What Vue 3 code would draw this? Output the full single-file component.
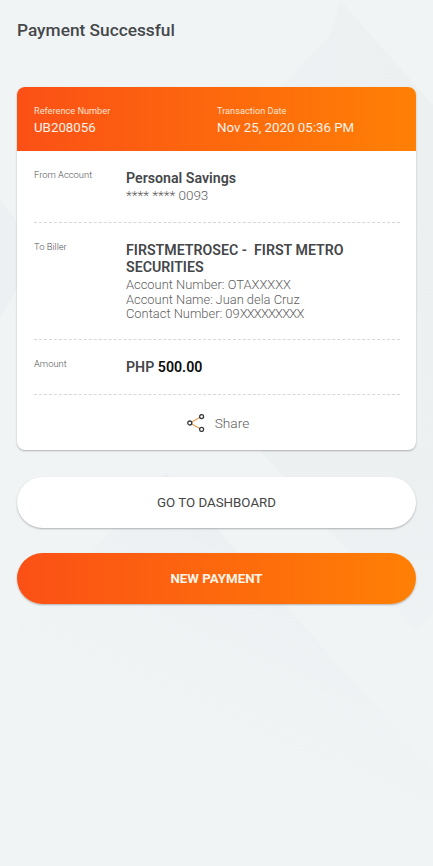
<template>
  <div class="page">
    <svg class="bg-shapes" viewBox="0 0 433 866" preserveAspectRatio="none">
      <defs>
        <linearGradient id="fade-down" x1="0" y1="0" x2="0" y2="1">
          <stop offset="0" stop-color="#ecf0f1" />
          <stop offset="1" stop-color="#eef1f3" stop-opacity="0.6" />
        </linearGradient>
        <linearGradient id="fade-low" x1="0.7" y1="0.25" x2="0.4" y2="0.85">
          <stop offset="0" stop-color="#edf0f2" />
          <stop offset="1" stop-color="#f1f4f5" stop-opacity="0" />
        </linearGradient>
        <linearGradient id="fade-top" x1="1" y1="0.3" x2="0" y2="0.7">
          <stop offset="0" stop-color="#ecf0f1" />
          <stop offset="1" stop-color="#eff2f4" />
        </linearGradient>
      </defs>
      <polygon points="340,0 433,105 433,450 280,450 280,87 330,35" fill="url(#fade-top)" />
      <polygon points="0,200 40,250 0,318" fill="#edf0f2" />
      <polygon points="260,450 433,450 433,612 415,630" fill="url(#fade-down)" />
      <polygon points="166,472 433,770 433,860 0,860 0,650" fill="url(#fade-low)" />
    </svg>

    <div class="content">
      <h1 class="title">Payment Successful</h1>

      <div class="card">
        <div class="card-head">
          <div class="head-col ref">
            <div class="head-label">Reference Number</div>
            <div class="head-value">{{ reference }}</div>
          </div>
          <div class="head-col">
            <div class="head-label">Transaction Date</div>
            <div class="head-value">{{ date }}</div>
          </div>
        </div>

        <div class="row row-from">
          <div class="row-label">From Account</div>
          <div class="row-body">
            <div class="strong">Personal Savings</div>
            <div class="light">**** **** 0093</div>
          </div>
        </div>

        <div class="row row-biller">
          <div class="row-label">To Biller</div>
          <div class="row-body">
            <div class="strong">FIRSTMETROSEC -&nbsp; FIRST METRO SECURITIES</div>
            <div class="biller-lines">
              <div class="light tight">Account Number: OTAXXXXX</div>
              <div class="light tight">Account Name:&#8201;Juan dela Cruz</div>
              <div class="light tight">Contact Number: 09<span class="mask">XXXXXXXXX</span></div>
            </div>
          </div>
        </div>

        <div class="row row-amount">
          <div class="row-label">Amount</div>
          <div class="row-body">
            <div class="strong">PHP <span class="amount">500.00</span></div>
          </div>
        </div>

        <div class="share">
          <svg class="share-icon" width="18" height="18" viewBox="0 0 18 18" fill="none">
            <path d="M3 9 L14.5 2.5 M3 9 L14.5 15.5" stroke="#e8a050" stroke-width="1.3" />
            <circle cx="2.8" cy="9" r="2" fill="#fff" stroke="#3a3a3a" stroke-width="1.3" />
            <circle cx="14.6" cy="2.6" r="2" fill="#fff" stroke="#3a3a3a" stroke-width="1.3" />
            <circle cx="14.6" cy="15.4" r="2" fill="#fff" stroke="#3a3a3a" stroke-width="1.3" />
          </svg>
          <span>Share</span>
        </div>
      </div>

      <button class="btn btn-white">GO TO DASHBOARD</button>
      <button class="btn btn-orange">NEW PAYMENT</button>
    </div>
  </div>
</template>

<script setup>
const reference = 'UB208056';
const date = 'Nov 25, 2020 05:36 PM';
</script>

<style>
html, body {
  margin: 0;
  padding: 0;
}
</style>

<style scoped>
.page {
  position: relative;
  width: 433px;
  height: 866px;
  overflow: hidden;
  background: #f1f4f5;
  font-family: Roboto, "Liberation Sans", sans-serif;
}

.bg-shapes {
  position: absolute;
  left: 0;
  top: 0;
  width: 433px;
  height: 866px;
}

.content {
  position: relative;
  padding: 20px 17px 0;
}

.title {
  margin: 0 0 47px;
  font-size: 17.3px;
  line-height: 20px;
  font-weight: 500;
  color: #45484b;
}

.card {
  background: #fff;
  border-radius: 8px;
  overflow: hidden;
  box-shadow: 0 1px 2px rgba(0, 0, 0, 0.28);
}

.card-head {
  display: flex;
  height: 64px;
  box-sizing: border-box;
  padding: 18px 17px 0;
  background: linear-gradient(90deg, #fb5016, #ff8005);
  color: #fff;
}

.head-col.ref {
  width: 183px;
}

.head-label {
  font-size: 9.2px;
  line-height: 12px;
  color: #ffe3d0;
}

.head-value {
  margin-top: 2px;
  font-size: 13.3px;
  line-height: 17px;
  color: #fff2e8;
}

.row {
  display: flex;
  margin: 0 16px 0 17px;
  box-sizing: border-box;
  border-bottom: 1px dashed #d8d8d8;
}

.row-from {
  height: 72px;
  padding-top: 19px;
}

.row-biller {
  height: 117px;
  padding-top: 19px;
}

.row-amount {
  height: 55px;
  padding-top: 19px;
}

.row-label {
  width: 92px;
  flex: none;
  margin-top: -1px;
  font-size: 9.4px;
  line-height: 12px;
  font-weight: 300;
  color: #555;
}

.row-body {
  flex: 1;
}

.strong {
  font-size: 14.2px;
  line-height: 17px;
  font-weight: 600;
  color: #45474a;
}

.amount {
  color: #0c0c0c;
}

.light {
  font-size: 13.5px;
  line-height: 17px;
  font-weight: 300;
  color: #5f6062;
}

.biller-lines {
  margin-top: 2px;
}

.light.tight {
  font-size: 12.9px;
  line-height: 14.5px;
}

.mask {
  letter-spacing: -0.8px;
}

.share {
  display: flex;
  align-items: center;
  justify-content: center;
  gap: 10px;
  height: 55px;
  padding-left: 3px;
  font-size: 13.7px;
  font-weight: 300;
  color: #5f6062;
}

.btn {
  display: block;
  width: 100%;
  height: 51px;
  padding: 0;
  border: none;
  border-radius: 26px;
  font-family: inherit;
  font-size: 13.3px;
  box-shadow: 0 1px 2px rgba(0, 0, 0, 0.28);
}

.btn-white {
  margin-top: 27px;
  background: #fff;
  color: #454545;
  font-weight: 400;
}

.btn-orange {
  margin-top: 25px;
  background: linear-gradient(90deg, #fb5016, #ff8005);
  color: #fff4e8;
  font-weight: 700;
}
</style>
